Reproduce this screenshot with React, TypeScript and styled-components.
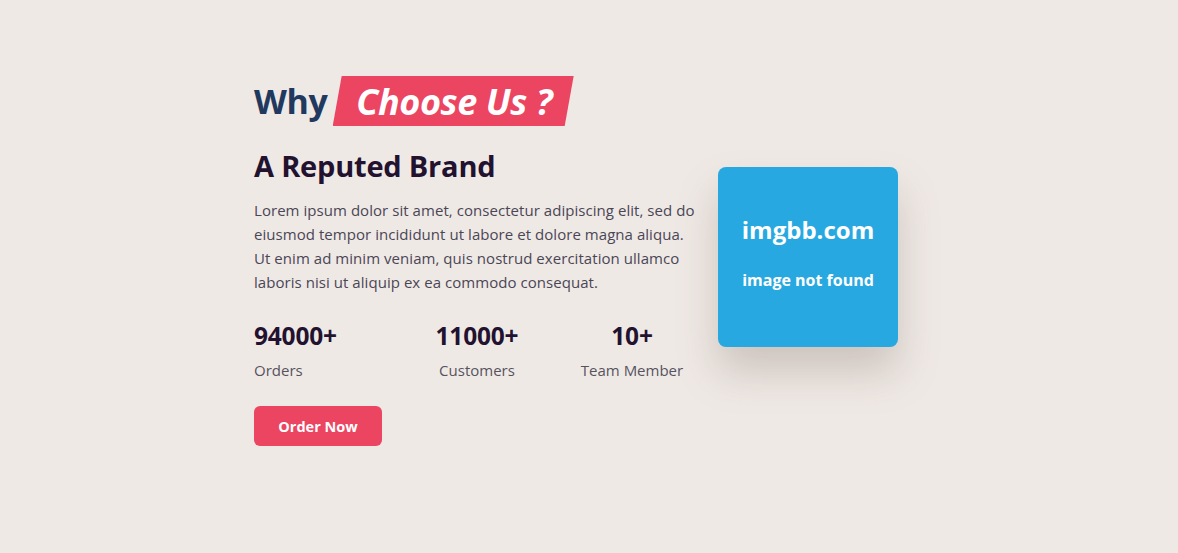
import React from "react";
import styled, { createGlobalStyle } from "styled-components";

const Global = createGlobalStyle`
  html, body { margin: 0; padding: 0; background: #efe9e5; }
  body { font-family: "Open Sans", "Noto Sans", sans-serif; }
  * { box-sizing: border-box; }
`;

const Page = styled.main`
  min-height: 553px;
  display: flex;
  justify-content: flex-start;
  align-items: flex-start;
  padding: 76px 0 0 254px;
`;

const Section = styled.section`
  display: flex;
  align-items: center;
  gap: 22px;
`;

const Left = styled.div`
  width: 442px;
  display: flex;
  flex-direction: column;
`;

const Title = styled.h1`
  margin: 0;
  display: flex;
  align-items: center;
  height: 50px;
  font-size: 34px;
  font-weight: 700;
  color: #21395e;
  letter-spacing: -0.3px;
`;

const Highlight = styled.span`
  margin-left: 5px;
  height: 50px;
  width: 241px;
  display: inline-flex;
  align-items: center;
  justify-content: center;
  padding-left: 2px;
  background: #ec4562;
  color: #ffffff;
  font-size: 36px;
  font-style: italic;
  letter-spacing: -0.4px;
  clip-path: polygon(9px 0, 100% 0, calc(100% - 9px) 100%, 0 100%);
`;

const Subtitle = styled.h2`
  margin: 22px 0 0;
  font-size: 29px;
  line-height: 36px;
  font-weight: 700;
  color: #23122f;
  letter-spacing: -0.2px;
`;

const Text = styled.p`
  margin: 14px 0 0;
  font-size: 15px;
  line-height: 24px;
  color: #4a4656;
  letter-spacing: 0.05px;
`;

const Stats = styled.div`
  margin-top: 27px;
  display: grid;
  grid-template-columns: 146px 154px 156px;
`;

const Stat = styled.div<{ $align: "left" | "center" }>`
  display: flex;
  flex-direction: column;
  align-items: ${(p) => (p.$align === "left" ? "flex-start" : "center")};
`;

const Number = styled.div`
  font-size: 24.5px;
  line-height: 30px;
  font-weight: 700;
  color: #23122f;
  letter-spacing: -0.2px;
`;

const Label = styled.div`
  margin-top: 9px;
  font-size: 15px;
  line-height: 20px;
  color: #56535f;
`;

const Button = styled.button`
  margin-top: 26px;
  width: 128px;
  height: 40px;
  border: none;
  border-radius: 6px;
  background: #ec4562;
  color: #ffffff;
  font-family: "Open Sans", sans-serif;
  font-size: 14.5px;
  font-weight: 700;
  cursor: pointer;
`;

const Card = styled.div`
  width: 180px;
  height: 180px;
  border-radius: 8px;
  background: #28a8e0;
  color: #ffffff;
  display: flex;
  flex-direction: column;
  align-items: center;
  justify-content: center;
  gap: 24px;
  padding-bottom: 8px;
  box-shadow: 0 25px 40px rgba(120, 100, 90, 0.28);
  margin-top: -8px;
`;

const CardTitle = styled.div`
  font-size: 24px;
  font-weight: 700;
  line-height: 30px;
`;

const CardSub = styled.div`
  font-size: 16px;
  font-weight: 700;
  line-height: 22px;
`;

export default function App() {
  return (
    <>
      <Global />
      <Page>
        <Section>
          <Left>
            <Title>
              Why<Highlight>Choose Us ?</Highlight>
            </Title>
            <Subtitle>A Reputed Brand</Subtitle>
            <Text>
              Lorem ipsum dolor sit amet, consectetur adipiscing elit, sed do
              eiusmod tempor incididunt ut labore et dolore magna aliqua. Ut
              enim ad minim veniam, quis nostrud exercitation ullamco laboris
              nisi ut aliquip ex ea commodo consequat.
            </Text>
            <Stats>
              <Stat $align="left">
                <Number>94000+</Number>
                <Label>Orders</Label>
              </Stat>
              <Stat $align="center">
                <Number>11000+</Number>
                <Label>Customers</Label>
              </Stat>
              <Stat $align="center">
                <Number>10+</Number>
                <Label>Team Member</Label>
              </Stat>
            </Stats>
            <div>
              <Button>Order Now</Button>
            </div>
          </Left>
          <Card>
            <CardTitle>imgbb.com</CardTitle>
            <CardSub>image not found</CardSub>
          </Card>
        </Section>
      </Page>
    </>
  );
}
